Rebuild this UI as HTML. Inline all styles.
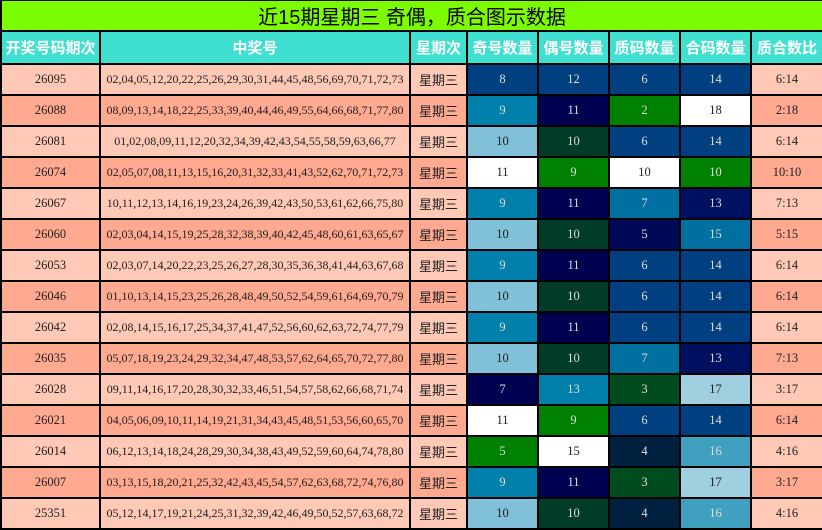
<!DOCTYPE html>
<html><head><meta charset="utf-8"><style>
body{margin:0;width:822px;height:530px;overflow:hidden;background:#fff}
table{border-collapse:collapse;table-layout:fixed;width:822px}
td{border:2px solid #000;padding:0;text-align:center;font-family:"Liberation Serif","Noto Serif CJK SC",serif;font-size:12.5px;color:#222;height:29px;white-space:nowrap;overflow:hidden}
td.n{font-size:12px;letter-spacing:0}
.t td{background:#7cfc00;height:26px;font-family:"Liberation Sans","Noto Sans CJK SC",sans-serif;font-size:20px;color:#000;border-top:1px solid #000}
.h td{background:#40e0d0;color:#fff;font-family:"Liberation Sans","Noto Sans CJK SC",sans-serif;font-weight:bold;font-size:15px;height:31px}
.a td{background:#ffc9b6}.b td{background:#ffa990}
.w td.d{font-family:"Liberation Sans","Noto Sans CJK SC",sans-serif;font-size:13px}
.a td.x,.b td.x{color:#ddd}
.a td.k,.b td.k{color:#222}
</style></head><body>
<table>
<colgroup><col style="width:99px"><col style="width:310px"><col style="width:57px"><col style="width:71px"><col style="width:71px"><col style="width:71px"><col style="width:71px"><col style="width:72px"></colgroup>
<tr class="t"><td colspan="8">近15期星期三 奇偶，质合图示数据</td></tr>
<tr class="h"><td>开奖号码期次</td><td>中奖号</td><td>星期次</td><td>奇号数量</td><td>偶号数量</td><td>质码数量</td><td>合码数量</td><td>质合数比</td></tr>
<tr class="a w"><td>26095</td><td class="n">02,04,05,12,20,22,25,26,29,30,31,44,45,48,56,69,70,71,72,73</td><td class="d">星期三</td><td class="x" style="background:#004080">8</td><td class="x" style="background:#004080">12</td><td class="x" style="background:#004080">6</td><td class="x" style="background:#004080">14</td><td>6:14</td></tr>
<tr class="b w"><td>26088</td><td class="n">08,09,13,14,18,22,25,33,39,40,44,46,49,55,64,66,68,71,77,80</td><td class="d">星期三</td><td class="x" style="background:#0080aa">9</td><td class="x" style="background:#000050">11</td><td class="x" style="background:#008000">2</td><td class="k" style="background:#fff">18</td><td>2:18</td></tr>
<tr class="a w"><td>26081</td><td class="n">01,02,08,09,11,12,20,32,34,39,42,43,54,55,58,59,63,66,77</td><td class="d">星期三</td><td class="k" style="background:#80c0d8">10</td><td class="x" style="background:#003c28">10</td><td class="x" style="background:#004080">6</td><td class="x" style="background:#004080">14</td><td>6:14</td></tr>
<tr class="b w"><td>26074</td><td class="n">02,05,07,08,11,13,15,16,20,31,32,33,41,43,52,62,70,71,72,73</td><td class="d">星期三</td><td class="k" style="background:#fff">11</td><td class="x" style="background:#008000">9</td><td class="k" style="background:#fff">10</td><td class="x" style="background:#008000">10</td><td>10:10</td></tr>
<tr class="a w"><td>26067</td><td class="n">10,11,12,13,14,16,19,23,24,26,39,42,43,50,53,61,62,66,75,80</td><td class="d">星期三</td><td class="x" style="background:#0080aa">9</td><td class="x" style="background:#000050">11</td><td class="x" style="background:#0070a0">7</td><td class="x" style="background:#001060">13</td><td>7:13</td></tr>
<tr class="b w"><td>26060</td><td class="n">02,03,04,14,15,19,25,28,32,38,39,40,42,45,48,60,61,63,65,67</td><td class="d">星期三</td><td class="k" style="background:#80c0d8">10</td><td class="x" style="background:#003c28">10</td><td class="x" style="background:#000858">5</td><td class="x" style="background:#0070a0">15</td><td>5:15</td></tr>
<tr class="a w"><td>26053</td><td class="n">02,03,07,14,20,22,23,25,26,27,28,30,35,36,38,41,44,63,67,68</td><td class="d">星期三</td><td class="x" style="background:#0080aa">9</td><td class="x" style="background:#000050">11</td><td class="x" style="background:#004080">6</td><td class="x" style="background:#004080">14</td><td>6:14</td></tr>
<tr class="b w"><td>26046</td><td class="n">01,10,13,14,15,23,25,26,28,48,49,50,52,54,59,61,64,69,70,79</td><td class="d">星期三</td><td class="k" style="background:#80c0d8">10</td><td class="x" style="background:#003c28">10</td><td class="x" style="background:#004080">6</td><td class="x" style="background:#004080">14</td><td>6:14</td></tr>
<tr class="a w"><td>26042</td><td class="n">02,08,14,15,16,17,25,34,37,41,47,52,56,60,62,63,72,74,77,79</td><td class="d">星期三</td><td class="x" style="background:#0080aa">9</td><td class="x" style="background:#000050">11</td><td class="x" style="background:#004080">6</td><td class="x" style="background:#004080">14</td><td>6:14</td></tr>
<tr class="b w"><td>26035</td><td class="n">05,07,18,19,23,24,29,32,34,47,48,53,57,62,64,65,70,72,77,80</td><td class="d">星期三</td><td class="k" style="background:#80c0d8">10</td><td class="x" style="background:#003c28">10</td><td class="x" style="background:#0070a0">7</td><td class="x" style="background:#001060">13</td><td>7:13</td></tr>
<tr class="a w"><td>26028</td><td class="n">09,11,14,16,17,20,28,30,32,33,46,51,54,57,58,62,66,68,71,74</td><td class="d">星期三</td><td class="x" style="background:#000050">7</td><td class="x" style="background:#0080aa">13</td><td class="x" style="background:#004c20">3</td><td class="k" style="background:#a0d0e0">17</td><td>3:17</td></tr>
<tr class="b w"><td>26021</td><td class="n">04,05,06,09,10,11,14,19,21,31,34,43,45,48,51,53,56,60,65,70</td><td class="d">星期三</td><td class="k" style="background:#fff">11</td><td class="x" style="background:#008000">9</td><td class="x" style="background:#004080">6</td><td class="x" style="background:#004080">14</td><td>6:14</td></tr>
<tr class="a w"><td>26014</td><td class="n">06,12,13,14,18,24,28,29,30,34,38,43,49,52,59,60,64,74,78,80</td><td class="d">星期三</td><td class="x" style="background:#008000">5</td><td class="k" style="background:#fff">15</td><td class="x" style="background:#002040">4</td><td class="x" style="background:#40a0c0">16</td><td>4:16</td></tr>
<tr class="b w"><td>26007</td><td class="n">03,13,15,18,20,21,25,32,42,43,45,54,57,62,63,68,72,74,76,80</td><td class="d">星期三</td><td class="x" style="background:#0080aa">9</td><td class="x" style="background:#000050">11</td><td class="x" style="background:#004c20">3</td><td class="k" style="background:#a0d0e0">17</td><td>3:17</td></tr>
<tr class="a w"><td>25351</td><td class="n">05,12,14,17,19,21,24,25,31,32,39,42,46,49,50,52,57,63,68,72</td><td class="d">星期三</td><td class="k" style="background:#80c0d8">10</td><td class="x" style="background:#003c28">10</td><td class="x" style="background:#002040">4</td><td class="x" style="background:#40a0c0">16</td><td>4:16</td></tr>
</table>
</body></html>
